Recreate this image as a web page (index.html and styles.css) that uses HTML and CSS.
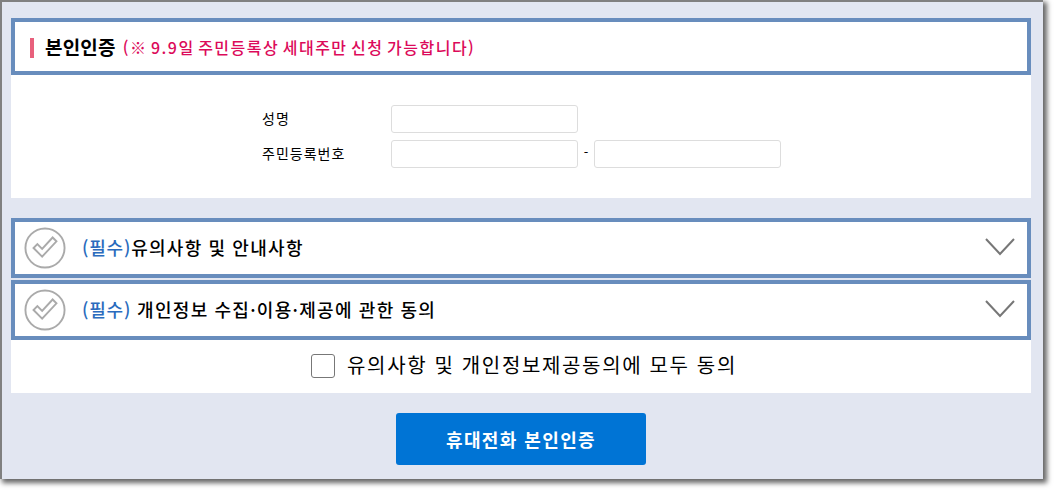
FILE: index.html
```html
<!DOCTYPE html>
<html lang="ko">

<head>
    <meta charset="UTF-8">
    <title>본인인증</title>
    <link rel="stylesheet" href="styles.css">
</head>

<body>
    <div class="frame">
        <div class="title-box">
            <span class="title-bar"></span>
            <h1 class="title">본인인증</h1>
            <span class="title-note">(※ 9.9일 주민등록상 세대주만 신청 가능합니다)</span>
        </div>

        <div class="form-card">
            <div class="form-row">
                <label class="form-label">성명</label>
                <input class="form-input" type="text">
            </div>
            <div class="form-row">
                <label class="form-label">주민등록번호</label>
                <input class="form-input" type="text">
                <span class="form-dash">-</span>
                <input class="form-input" type="text">
            </div>
        </div>

        <div class="agree-box agree-first">
            <svg class="check-icon" viewBox="0 0 44 44">
                <circle cx="22" cy="22" r="20.5" fill="none" stroke="#aaa" stroke-width="2"></circle>
                <path d="M10 22 L19 31 L34 15 L30 11 L19 23 L14 18 Z" fill="none" stroke="#aaa" stroke-width="2"></path>
            </svg>
            <span class="agree-text"><span class="required">(필수)</span>유의사항 및 안내사항</span>
            <svg class="arrow-icon" viewBox="0 0 30 18">
                <path d="M1 1 L15 16 L29 1" fill="none" stroke="#777" stroke-width="2"></path>
            </svg>
        </div>
        <div class="agree-box">
            <svg class="check-icon" viewBox="0 0 44 44">
                <circle cx="22" cy="22" r="20.5" fill="none" stroke="#aaa" stroke-width="2"></circle>
                <path d="M10 22 L19 31 L34 15 L30 11 L19 23 L14 18 Z" fill="none" stroke="#aaa" stroke-width="2"></path>
            </svg>
            <span class="agree-text"><span class="required">(필수)</span> 개인정보 수집·이용·제공에 관한 동의</span>
            <svg class="arrow-icon" viewBox="0 0 30 18">
                <path d="M1 1 L15 16 L29 1" fill="none" stroke="#777" stroke-width="2"></path>
            </svg>
        </div>

        <div class="all-agree">
            <span class="all-check"></span>
            <span class="all-text">유의사항 및 개인정보제공동의에 모두 동의</span>
        </div>

        <div class="button-row">
            <button class="submit-btn" type="button">휴대전화 본인인증</button>
        </div>
    </div>
</body>

</html>
```

FILE: styles.css
```css
html,
body {
    height: 490px;
}

body {
    margin: 0;
    padding: 0;
    background: #fff;
    font-family: "Noto Sans CJK KR", "Noto Sans", sans-serif;
    color: #000;
    overflow: hidden;
}

.frame {
    box-sizing: border-box;
    width: 1043px;
    height: 479px;
    padding: 16px 12px 0 9px;
    background: #e2e6f1;
    border-top: 2px solid #808080;
    border-left: 2px solid #808080;
    box-shadow: 3px 3px 5px 1px #666;
}

.title-box {
    box-sizing: border-box;
    height: 57px;
    display: flex;
    align-items: center;
    padding-left: 15px;
    background: #fff;
    border: 4px solid #688dbd;
}

.title-bar {
    width: 4px;
    height: 20px;
    margin-top: 3px;
    margin-right: 11px;
    background: #e8607c;
}

.title {
    margin: 0 7px 0 0;
    font-size: 19px;
    font-weight: 700;
    line-height: 24px;
    letter-spacing: 0.2px;
}

.title-note {
    margin-top: 1px;
    font-size: 16px;
    font-weight: 500;
    letter-spacing: 1.5px;
    word-spacing: -2.5px;
    color: #dc0a5a;
}

.form-card {
    box-sizing: border-box;
    height: 123px;
    padding-top: 30px;
    background: #fff;
}

.form-row {
    display: flex;
    align-items: center;
    height: 28px;
    margin-bottom: 7px;
    padding-left: 251px;
}

.form-label {
    width: 129px;
    padding-bottom: 2px;
    font-size: 14px;
    letter-spacing: 1px;
}

.form-input {
    box-sizing: border-box;
    width: 187px;
    height: 28px;
    margin: 0;
    padding: 0 8px;
    background: #fff;
    border: 1px solid #ddd;
    border-radius: 3px;
}

.form-dash {
    width: 16px;
    padding-bottom: 6px;
    font-size: 13px;
    text-align: center;
}

.agree-box {
    box-sizing: border-box;
    height: 60px;
    margin-bottom: 2px;
    display: flex;
    align-items: center;
    padding: 0 12px 0 9px;
    background: #fff;
    border: 4px solid #688dbd;
}

.agree-first {
    margin-top: 20px;
}

.check-icon {
    width: 42px;
    height: 42px;
    margin-right: 16px;
    flex-shrink: 0;
}

.agree-text {
    flex: 1;
    padding-bottom: 2px;
    font-size: 18px;
    font-weight: 500;
    letter-spacing: 1.3px;
    word-spacing: -0.4px;
}

.required {
    color: #2a6bbd;
    letter-spacing: 0.8px;
}

.arrow-icon {
    width: 30px;
    height: 18px;
    margin-bottom: 3px;
}

.all-agree {
    height: 53px;
    margin-top: -2px;
    padding-left: 6px;
    display: flex;
    align-items: center;
    justify-content: center;
    background: #fff;
}

.all-check {
    box-sizing: border-box;
    width: 24px;
    height: 24px;
    margin-right: 12px;
    margin-bottom: 2px;
    background: #fff;
    border: 1px solid #777;
    border-radius: 3px;
}

.all-text {
    padding-bottom: 5px;
    font-size: 20px;
    letter-spacing: 1.65px;
}

.button-row {
    display: flex;
    justify-content: center;
    padding-top: 20px;
}

.submit-btn {
    width: 250px;
    height: 52px;
    border: 0;
    border-radius: 3px;
    background: #0074d5;
    color: #fff;
    font-family: inherit;
    font-size: 18px;
    font-weight: 700;
    letter-spacing: 1.4px;
}
```
